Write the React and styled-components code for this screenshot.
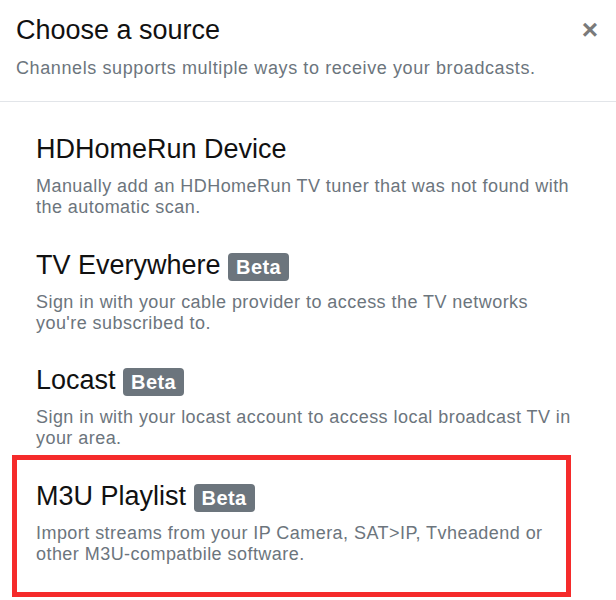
import styled, { createGlobalStyle } from "styled-components";

const sources = [
  {
    id: "hdhr",
    name: "HDHomeRun Device",
    description:
      "Manually add an HDHomeRun TV tuner that was not found with the automatic scan.",
    beta: false,
  },
  {
    id: "tve",
    name: "TV Everywhere",
    description:
      "Sign in with your cable provider to access the TV networks you're subscribed to.",
    beta: true,
  },
  {
    id: "locast",
    name: "Locast",
    description:
      "Sign in with your locast account to access local broadcast TV in your area.",
    beta: true,
  },
  {
    id: "m3u",
    name: "M3U Playlist",
    description:
      "Import streams from your IP Camera, SAT>IP, Tvheadend or other M3U-compatbile software.",
    beta: true,
  },
];

const App = () => {
  return (
    <>
      <GlobalStyle />
      <StyledModal>
        <StyledHeader>
          <StyledTitleRow>
            <StyledTitle>Choose a source</StyledTitle>
            <StyledClose type="button" aria-label="Close">
              ×
            </StyledClose>
          </StyledTitleRow>
          <StyledSubtitle>
            Channels supports multiple ways to receive your broadcasts.
          </StyledSubtitle>
        </StyledHeader>
        <StyledList>
          {sources.map((source) => (
            <StyledItem key={source.id} $selected={source.id === "m3u"}>
              <StyledItemTitle>
                {source.name}
                {source.beta && (
                  <>
                    {" "}
                    <StyledBadge>Beta</StyledBadge>
                  </>
                )}
              </StyledItemTitle>
              <StyledItemText>{source.description}</StyledItemText>
            </StyledItem>
          ))}
        </StyledList>
      </StyledModal>
    </>
  );
};

export default App;

const GlobalStyle = createGlobalStyle`
  html, body {
    margin: 0;
    padding: 0;
    background: #fff;
  }
  body {
    font-family: "Liberation Sans", Arial, sans-serif;
    color: #212529;
  }
`;

const StyledModal = styled.div`
  width: 616px;
  min-height: 600px;
  background: #fff;
  overflow: hidden;
`;

const StyledHeader = styled.div`
  padding: 14px 16px 22px 16px;
  border-bottom: 1px solid #e2e5e9;
`;

const StyledTitleRow = styled.div`
  display: flex;
  align-items: center;
  justify-content: space-between;
`;

const StyledTitle = styled.h4`
  margin: 0;
  font-size: 27px;
  line-height: 32px;
  font-weight: 400;
  color: #111;
`;

const StyledClose = styled.button`
  border: 0;
  background: transparent;
  padding: 0;
  margin: 0 2px 0 0;
  font-family: "Liberation Sans", Arial, sans-serif;
  font-size: 28px;
  font-weight: 700;
  line-height: 1;
  color: #7a7a7a;
  cursor: pointer;
`;

const StyledSubtitle = styled.p`
  margin: 12px 0 0 0;
  font-size: 18px;
  line-height: 21px;
  letter-spacing: 0.6px;
  color: #6c757d;
`;

const StyledList = styled.div`
  display: flex;
  flex-direction: column;
  gap: 30.5px;
  padding: 31px 34px 0 36px;
`;

const StyledItem = styled.div`
  position: relative;

  &::after {
    content: "";
    display: ${(props) => (props.$selected ? "block" : "none")};
    position: absolute;
    top: -25px;
    bottom: -32px;
    left: -24px;
    right: 11px;
    border: 5px solid #f52b2b;
    pointer-events: none;
  }
`;

const StyledItemTitle = styled.h3`
  margin: 0;
  font-size: 27px;
  line-height: 32px;
  font-weight: 400;
  color: #111;
`;

const StyledBadge = styled.span`
  display: inline-block;
  padding: 4px 8px;
  font-size: 20px;
  line-height: 1;
  font-weight: 700;
  letter-spacing: 0.4px;
  color: #fff;
  background: #6c757d;
  border-radius: 4px;
  vertical-align: baseline;
`;

const StyledItemText = styled.p`
  margin: 11px 0 0 0;
  font-size: 18px;
  line-height: 21px;
  letter-spacing: 0.45px;
  color: #6c757d;
`;
